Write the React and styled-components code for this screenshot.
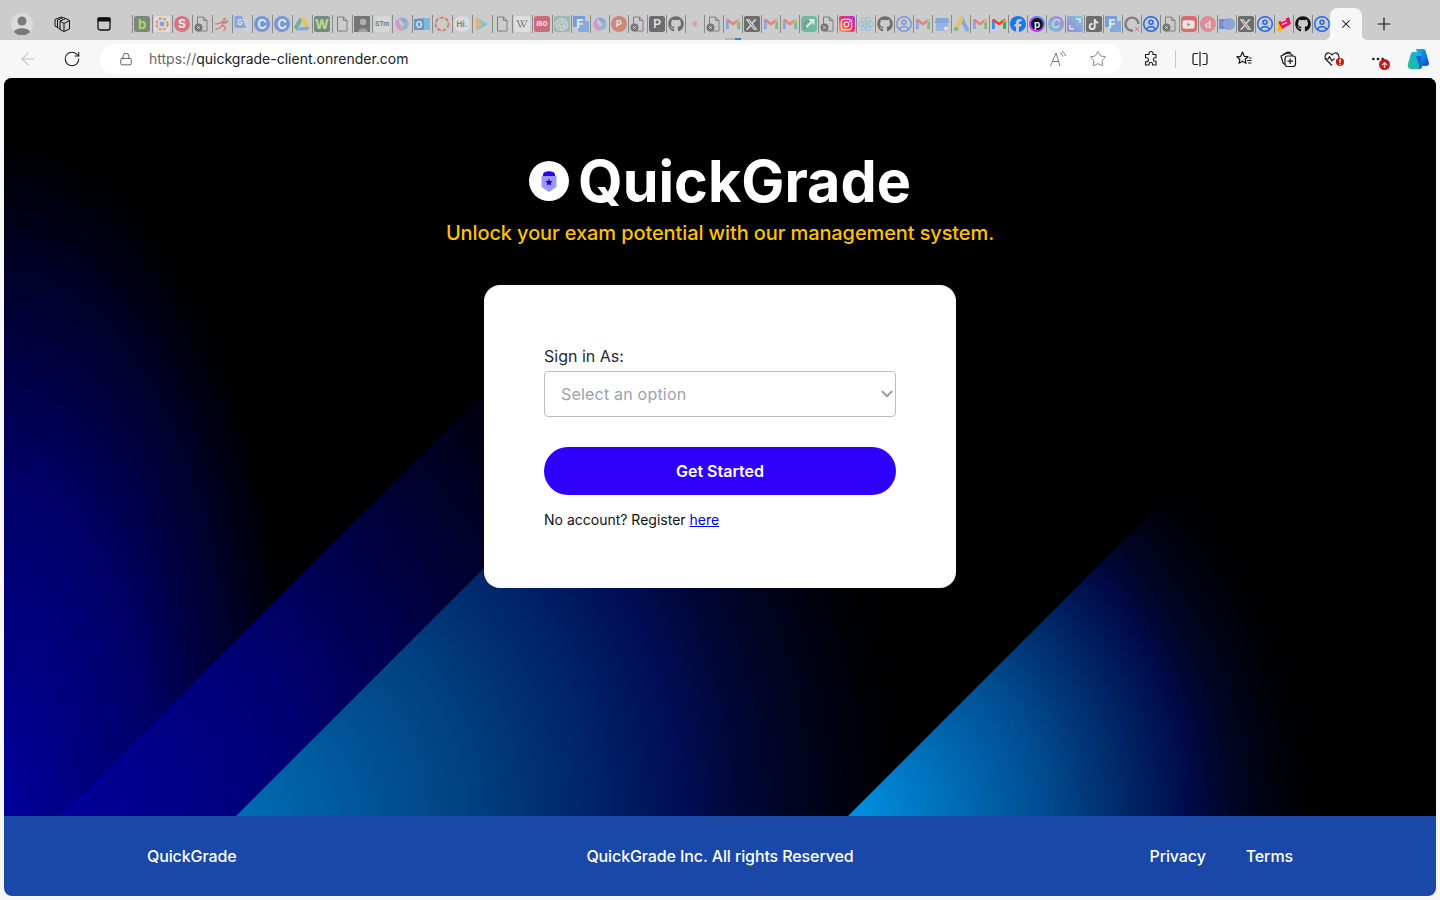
import React from "react";
import styled, { createGlobalStyle } from "styled-components";
import { ArrowLeft, RotateCw, Lock, Star, X, Plus, ChevronDown, Ellipsis } from "lucide-react";
import {
  FaGithub,
  FaXTwitter,
  FaTiktok,
  FaFacebook,
  FaWikipediaW,
  FaInstagram,
  FaReact,
  FaYoutube,
  FaRegCircleUser,
} from "react-icons/fa6";
import { SiOpenai } from "react-icons/si";

const GlobalStyle = createGlobalStyle`
  html, body {
    margin: 0;
    height: 100%;
    background: #f7f7f7;
    overflow: hidden;
  }
  * {
    box-sizing: border-box;
  }
`;

const Frame = styled.div`
  display: flex;
  flex-direction: column;
  height: 100vh;
  font-family: Inter, sans-serif;
`;

const TabStrip = styled.div`
  display: flex;
  align-items: center;
  height: 40px;
  flex: none;
  padding-top: 8px;
  background: #cccccc;
`;

const Avatar = styled.div`
  width: 22px;
  height: 22px;
  margin: 0 8px 0 11px;
  flex: none;
`;

const StripButton = styled.div`
  display: flex;
  justify-content: center;
  align-items: center;
  flex: none;
  width: ${(p) => p.$width || 42}px;
  color: #111;
`;

const PinnedTabs = styled.div`
  display: flex;
  margin-left: 6.7px;
  flex: none;
`;

const PinnedSlot = styled.div`
  position: relative;
  display: flex;
  justify-content: center;
  align-items: center;
  width: ${(p) => p.$pitch}px;
  height: 18px;
  flex: none;
  border-left: 1px solid #8a8a8a;
`;

const Loading = styled.div`
  position: absolute;
  top: 23px;
  left: 1px;
  width: 16px;
  height: 2px;
  background: linear-gradient(90deg, #b5b5b5 62%, #3b7de8 62%);
`;

const Fav = styled.div`
  display: flex;
  width: 16px;
  height: 16px;
  opacity: ${(p) => (p.$bright ? 1 : 0.5)};
`;

const ActiveTab = styled.div`
  position: relative;
  display: flex;
  justify-content: center;
  align-items: center;
  align-self: flex-end;
  width: 32px;
  height: 32px;
  margin-left: -0.7px;
  flex: none;
  background: #f7f7f7;
  border-radius: 8px 8px 0 0;
  color: #111;

  &::before,
  &::after {
    content: "";
    position: absolute;
    bottom: 0;
    width: 6px;
    height: 6px;
  }
  &::before {
    left: -6px;
    background: radial-gradient(circle at 0 0, #cccccc 6px, #f7f7f7 6.5px);
  }
  &::after {
    right: -6px;
    background: radial-gradient(circle at 100% 0, #cccccc 6px, #f7f7f7 6.5px);
  }
`;

const NewTab = styled.div`
  display: flex;
  justify-content: center;
  width: 44px;
  flex: none;
  color: #111;
`;

const Toolbar = styled.div`
  display: flex;
  align-items: center;
  height: 38px;
  flex: none;
  padding: 0 4px 0 6px;
  background: #f7f7f7;
  color: #1a1a1a;
`;

const NavButton = styled.div`
  position: relative;
  display: flex;
  justify-content: center;
  align-items: center;
  width: ${(p) => p.$width || 44}px;
  margin-left: ${(p) => p.$left || 0}px;
  flex: none;
  color: ${(p) => p.$color || "#1a1a1a"};
`;

const AddressBar = styled.div`
  display: flex;
  align-items: center;
  flex: 1;
  height: 30px;
  margin-left: 6px;
  padding: 0 15px 0 19px;
  border-radius: 15px;
  background: #ffffff;
  font-size: 14px;
  color: #222;
`;

const Scheme = styled.span`
  color: #666;
`;

const Url = styled.div`
  flex: 1;
  margin-left: 16px;
  padding-bottom: 2px;
`;

const BarIcons = styled.div`
  display: flex;
  align-items: center;
  gap: 22px;
  color: #777;
`;

const ToolDivider = styled.div`
  width: 1px;
  height: 18px;
  margin: 0 2px 0 4px;
  flex: none;
  background: #c8c8c8;
`;

const Badge = styled.span`
  position: absolute;
  top: ${(p) => p.$top}px;
  right: ${(p) => p.$right}px;
  display: flex;
  justify-content: center;
  align-items: center;
  width: ${(p) => p.$size}px;
  height: ${(p) => p.$size}px;
  border-radius: 50%;
  background: #c4161c;
  color: #fff;
  font-size: 8px;
  font-weight: 700;
  line-height: 1;
`;

const Page = styled.div`
  display: flex;
  flex-direction: column;
  flex: 1;
  margin: 0 4px 4px;
  border-radius: 8px;
  overflow: hidden;
`;

const Main = styled.main`
  position: relative;
  display: flex;
  flex-direction: column;
  align-items: center;
  flex: 1;
  padding-top: 74px;
  background: #000;
`;

const Backdrop = styled.svg`
  position: absolute;
  inset: 0;
  width: 100%;
  height: 100%;
`;

const Brand = styled.div`
  position: relative;
  display: flex;
  align-items: center;
  gap: 9px;
`;

const Title = styled.h1`
  margin: 0;
  font-size: 57.5px;
  line-height: 58px;
  font-weight: 700;
  color: #fff;
`;

const Tagline = styled.p`
  position: relative;
  margin: 9px 0 0;
  font-size: 20px;
  line-height: 28px;
  font-weight: 500;
  letter-spacing: -0.11px;
  color: #ffc107;
`;

const Card = styled.form`
  position: relative;
  display: flex;
  flex-direction: column;
  width: 472px;
  height: 303px;
  margin-top: 38px;
  padding: 59px 60px 0;
  border-radius: 16px;
  background: #fff;
`;

const Label = styled.label`
  font-size: 16px;
  line-height: 24px;
  color: #1f2937;
`;

const SelectWrap = styled.div`
  position: relative;
  margin-top: 3px;
`;

const Select = styled.select`
  display: block;
  width: 100%;
  height: 46px;
  padding: 0 16px;
  appearance: none;
  background: #fff;
  border: 1px solid #bcbcc0;
  border-radius: 4px;
  font-family: Inter, sans-serif;
  font-size: 16px;
  letter-spacing: 0.2px;
  color: #9ca3af;
`;

const SelectArrow = styled(ChevronDown)`
  position: absolute;
  top: 14px;
  right: 0;
  color: #9aa1b0;
`;

const SubmitButton = styled.button`
  height: 48px;
  margin-top: 30px;
  border: 0;
  border-radius: 24px;
  background: #3000ff;
  font-family: Inter, sans-serif;
  font-size: 16px;
  font-weight: 600;
  color: #fff;
`;

const RegisterNote = styled.p`
  margin: 15px 0 0;
  font-size: 14px;
  line-height: 20px;
  color: #111;
`;

const RegisterLink = styled.a`
  color: #0000ee;
  text-decoration: underline;
`;

const Footer = styled.footer`
  display: grid;
  grid-template-columns: 1fr auto 1fr;
  align-items: center;
  height: 80px;
  flex: none;
  padding: 0 143px;
  background: #1a48a8;
  font-size: 16px;
  font-weight: 500;
  letter-spacing: -0.11px;
  color: #fff;
`;

const FooterLinks = styled.div`
  display: flex;
  justify-content: flex-end;
  gap: 40px;
`;

const Tile = styled.div`
  display: flex;
  justify-content: center;
  align-items: center;
  width: 16px;
  height: 16px;
  border-radius: ${(p) => p.$radius || "2px"};
  background: ${(p) => p.$bg};
  color: ${(p) => p.$color};
`;

function DocIcon({ broken }) {
  return (
    <svg viewBox="0 0 16 16" width="16" height="16" fill="none">
      <path d="M3.5 1h6l3.500 3.500V15h-9.500z" stroke="#333" strokeWidth="1" />
      <path d="M9.500 1v3.500H13" stroke="#333" strokeWidth="1" />
      {broken && <circle cx="4.500" cy="11.500" r="4" fill="#222" />}
      {broken && <path d="M3.200 10.200l2.600 2.600M5.800 10.200l-2.600 2.600" stroke="#fff" strokeWidth="0.9" />}
    </svg>
  );
}

function GmailIcon() {
  return (
    <svg viewBox="0 0 16 16" width="16" height="16" fill="none">
      <path d="M1 13V4.500l2.800 1V13z" fill="#4285f4" />
      <path d="M12.200 13V5.500l2.800-1V13z" fill="#34a853" />
      <path d="M1 4.500c0-1.400 1.600-2 2.600-1.200L8 6.600l4.400-3.300c1-.8 2.600-.2 2.600 1.200l-2.800 2L8 9.600 3.800 6.500z" fill="#ea4335" />
      <path d="M12.200 3.900l2.800-.4v1.600l-2.800 2z" fill="#fbbc04" />
    </svg>
  );
}

function SwirlIcon() {
  return (
    <svg viewBox="0 0 16 16" width="16" height="16" fill="none">
      <path d="M8 1.500a6.500 6.500 0 0 1 6 4L10 8 8 5 5 3z" fill="#5b7be8" />
      <path d="M14 5.500a6.500 6.500 0 0 1-4 9L8 11l2-3z" fill="#4fb0c8" />
      <path d="M10 14.500a6.500 6.500 0 0 1-8.500-6.500L5 6l3 5z" fill="#d66bc0" />
      <path d="M1.500 8A6.500 6.500 0 0 1 8 1.500L5 3v3z" fill="#9a6be0" />
    </svg>
  );
}

function Letter({ bg, fg = "#fff", round, size = 11, weight = 700, text, family = "Inter, sans-serif" }) {
  return (
    <svg viewBox="0 0 16 16" width="16" height="16">
      {round ? <circle cx="8" cy="8" r="8" fill={bg} /> : <rect width="16" height="16" rx="2.500" fill={bg} />}
      <text x="8" y="8" dy="0.36em" textAnchor="middle" fontFamily={family} fontSize={size} fontWeight={weight} fill={fg}>
        {text}
      </text>
    </svg>
  );
}

// every pinned tab's favicon, left to right
const renderers = {
  b: () => <Letter bg="#2b4a2b" fg="#8fe000" text="b" size={13} />,
  dots: () => (
    <svg viewBox="0 0 16 16" width="16" height="16">
      <rect width="16" height="16" rx="2" fill="#eee" />
      <circle cx="8" cy="8" r="5.500" fill="none" stroke="#e8703a" strokeWidth="2.400" strokeDasharray="3 1.400" />
      <circle cx="8" cy="8" r="2.400" fill="#3a78d8" />
    </svg>
  ),
  s: () => <Letter bg="#e01f3d" text="S" round size={12} />,
  docx: () => <DocIcon broken />,
  doc: () => <DocIcon />,
  runner: () => (
    <svg viewBox="0 0 16 16" width="16" height="16" fill="none" stroke="#e0282e" strokeWidth="1.300">
      <circle cx="10.500" cy="3" r="1.300" fill="#e0282e" stroke="none" />
      <path d="M1 8c3 0 6-1 8.500-3l-1 4 3 3-2 3M8.500 9L5 12.500 1.500 13M10 6l4.500-1M7 6.500l6 .5" />
    </svg>
  ),
  translate: () => (
    <svg viewBox="0 0 16 16" width="16" height="16">
      <path d="M7 4h7.500a1 1 0 0 1 1 1v9.500a1 1 0 0 1-1 1H9z" fill="#c9d4ee" />
      <path d="M1.500 0h6.300L12 12H1.500a1 1 0 0 1-1-1V1a1 1 0 0 1 1-1z" fill="#4285f4" />
      <text x="5.800" y="8.800" textAnchor="middle" fontFamily="Inter, sans-serif" fontSize="7" fontWeight="700" fill="#fff">
        G
      </text>
    </svg>
  ),
  c: () => <Letter bg="#1a66e8" text="C" round size={13} />,
  drive: () => (
    <svg viewBox="0 0 16 16" width="16" height="16">
      <path d="M5.500 1.500h5L16 11h-5z" fill="#fbbc04" />
      <path d="M5.500 1.500L0 11l2.500 3.500L8 5z" fill="#0f9d58" />
      <path d="M2.500 14.500h11L16 11H5.300z" fill="#4285f4" />
    </svg>
  ),
  w: () => <Letter bg="#1c4a3a" fg="#a8e05a" text="W" size={13} weight={800} />,
  photo: () => (
    <svg viewBox="0 0 16 16" width="16" height="16">
      <rect width="16" height="16" fill="#222" />
      <circle cx="9" cy="6" r="3.200" fill="#999" />
      <path d="M4 16c1-5 9-5 10 0z" fill="#777" />
    </svg>
  ),
  stm: () => <Letter bg="#e2e2e2" fg="#222" text="STm" size={6.500} />,
  swirl: () => <SwirlIcon />,
  outlook: () => (
    <svg viewBox="0 0 16 16" width="16" height="16">
      <rect x="4" y="2" width="12" height="12" fill="#28a8ea" />
      <rect y="3" width="10" height="11" rx="1" fill="#0f5fb5" />
      <text x="5" y="11.500" textAnchor="middle" fontFamily="Inter, sans-serif" fontSize="8.500" fontWeight="700" fill="#fff">
        O
      </text>
    </svg>
  ),
  dashed: () => (
    <svg viewBox="0 0 16 16" width="16" height="16">
      <circle cx="8" cy="8" r="6.500" fill="none" stroke="#e03020" strokeWidth="2" strokeDasharray="4 1.500" />
    </svg>
  ),
  hi: () => <Letter bg="#ececec" fg="#333" text="Hi." round size={8} />,
  play: () => (
    <svg viewBox="0 0 16 16" width="16" height="16">
      <path d="M2 1l6.500 7L2 15z" fill="#f0a030" />
      <path d="M2 1l12 7-5.500 0z" fill="#40c8a8" />
      <path d="M2 15l12-7-5.500 0z" fill="#30b0d8" />
    </svg>
  ),
  wiki: () => (
    <Tile $bg="#f2f2f2" $color="#222">
      <FaWikipediaW size={12} />
    </Tile>
  ),
  iso: () => <Letter bg="#c8102e" text="ISO" size={6.500} weight={800} />,
  gpt: () => (
    <Tile $bg="#74aa9c" $color="#eee">
      <SiOpenai size={13} />
    </Tile>
  ),
  f: () => (
    <svg viewBox="0 0 16 16" width="16" height="16">
      <rect x="0" y="0" width="12" height="11" fill="#1a73e8" />
      <rect x="5" y="5" width="11" height="11" fill="#3d8de8" />
      <text x="6.800" y="12" textAnchor="middle" fontFamily="Inter, sans-serif" fontSize="12" fontWeight="800" fill="#fff">
        F
      </text>
    </svg>
  ),
  ppt: () => <Letter bg="#d24726" text="P" round size={9} />,
  p: () => <Letter bg="#111" text="P" size={12} weight={600} />,
  github: () => <FaGithub size={16} color="#111" />,
  eye: () => (
    <svg viewBox="0 0 16 16" width="16" height="16" fill="none">
      <path d="M1 8c3-4 11-4 14 0-3 4-11 4-14 0z" stroke="#b9c4e8" strokeWidth="1.200" />
      <circle cx="8" cy="8" r="2.400" fill="#ee7070" />
    </svg>
  ),
  gmail: () => <GmailIcon />,
  x: () => (
    <Tile $bg="#111" $color="#fff">
      <FaXTwitter size={13} />
    </Tile>
  ),
  arrow: () => (
    <svg viewBox="0 0 16 16" width="16" height="16" fill="none">
      <rect width="16" height="16" rx="4" fill="#10b070" />
      <path d="M4 12.500c-2-3 0-8 5-8" stroke="#5a1e9a" strokeWidth="2.200" strokeDasharray="1.500 .8" />
      <path d="M5.500 11L12 4.500M8 4h4.500v4.500" stroke="#fff" strokeWidth="1.800" />
    </svg>
  ),
  insta: () => (
    <Tile $bg="linear-gradient(45deg, #fbad50, #e1306c 55%, #a838e8)" $color="#fff">
      <FaInstagram size={13} />
    </Tile>
  ),
  react: () => <FaReact size={16} color="#3fb4d8" />,
  person: () => <FaRegCircleUser size={16} color="#2266ee" />,
  store: () => (
    <svg viewBox="0 0 16 16" width="16" height="16">
      <path d="M2 2h12l1.500 5H.5z" fill="#4285f4" />
      <rect x="2" y="7" width="12" height="8" fill="#6a9cf0" />
      <circle cx="12" cy="12.500" r="2" fill="#fff" />
    </svg>
  ),
  ads: () => (
    <svg viewBox="0 0 16 16" width="16" height="16" fill="none" strokeLinecap="round">
      <path d="M8.500 2.500l5.500 11" stroke="#4285f4" strokeWidth="4" />
      <path d="M8.500 2.500l-5 10" stroke="#fbbc04" strokeWidth="4" />
      <circle cx="3" cy="13" r="2.200" fill="#34a853" />
    </svg>
  ),
  fb: () => <FaFacebook size={16} color="#1877f2" />,
  picsart: () => (
    <svg viewBox="0 0 16 16" width="16" height="16">
      <defs>
        <linearGradient id="pa" x1="0" y1="1" x2="1" y2="0">
          <stop offset="0" stopColor="#f0f" />
          <stop offset="1" stopColor="#30a0ff" />
        </linearGradient>
      </defs>
      <circle cx="8" cy="8" r="8" fill="url(#pa)" />
      <circle cx="8" cy="8" r="6" fill="#111" />
      <text x="8" y="11.500" textAnchor="middle" fontFamily="Inter, sans-serif" fontSize="10" fontWeight="600" fill="#fff">
        p
      </text>
    </svg>
  ),
  canva: () => (
    <svg viewBox="0 0 16 16" width="16" height="16">
      <defs>
        <linearGradient id="cv" x1="0" y1="1" x2="1" y2="0">
          <stop offset="0" stopColor="#20c4d8" />
          <stop offset="1" stopColor="#7d3ce8" />
        </linearGradient>
      </defs>
      <circle cx="8" cy="8" r="8" fill="url(#cv)" />
      <text x="8" y="12" textAnchor="middle" fontFamily="Inter, sans-serif" fontSize="12" fontStyle="italic" fill="#fff">
        C
      </text>
    </svg>
  ),
  gradient: () => (
    <svg viewBox="0 0 16 16" width="16" height="16" fill="none">
      <defs>
        <linearGradient id="gs" x1="0" y1="1" x2="1" y2="0">
          <stop offset="0" stopColor="#6a3de8" />
          <stop offset="1" stopColor="#35c8e8" />
        </linearGradient>
      </defs>
      <rect width="16" height="16" rx="2" fill="url(#gs)" />
      <path d="M3 9v4h4M13 7V3H9" stroke="#fff" strokeWidth="1.400" />
    </svg>
  ),
  tiktok: () => (
    <Tile $bg="#111" $color="#fff">
      <FaTiktok size={11} />
    </Tile>
  ),
  arcx: () => (
    <svg viewBox="0 0 16 16" width="16" height="16" fill="none">
      <path d="M9 14.500A6.500 6.500 0 1 1 14.500 8" stroke="#333" strokeWidth="2.400" />
      <path d="M11 11l4 4M15 11l-4 4" stroke="#d03030" strokeWidth="1" />
    </svg>
  ),
  yt: () => (
    <Tile $bg="#e01010" $color="#fff" $radius="4px">
      <FaYoutube size={13} />
    </Tile>
  ),
  d: () => <Letter bg="#ec5060" text="d" round size={11} family="Liberation Serif, serif" />,
  pill: () => (
    <svg viewBox="0 0 16 16" width="16" height="16">
      <path d="M0 3h8v10H0z" fill="#1a56d8" />
      <circle cx="10" cy="8" r="6" fill="#4a7ce8" />
    </svg>
  ),
  flag: () => (
    <svg viewBox="0 0 16 16" width="16" height="16">
      <path d="M2 6l11-5 2 7-9 5z" fill="#f0145a" />
      <path d="M5 5.500l5-2M6 8.500l5-2" stroke="#fff" strokeWidth="1.100" />
      <path d="M2 6l4 7-1.500 2.500L2 15z" fill="#f5b800" />
    </svg>
  ),
};

const wideTabs = ["b", "dots", "s", "docx", "runner", "translate", "c", "c", "drive", "w", "doc", "photo", "stm", "swirl", "outlook", "dashed", "hi", "play", "doc", "wiki", "iso"];

const narrowTabs = [
  { kind: "gpt" },
  { kind: "f" },
  { kind: "swirl" },
  { kind: "ppt" },
  { kind: "docx" },
  { kind: "p" },
  { kind: "github" },
  { kind: "eye" },
  { kind: "docx" },
  { kind: "gmail", loading: true },
  { kind: "x" },
  { kind: "gmail" },
  { kind: "gmail" },
  { kind: "arrow" },
  { kind: "docx" },
  { kind: "insta", bright: true },
  { kind: "react" },
  { kind: "github" },
  { kind: "person" },
  { kind: "gmail" },
  { kind: "store" },
  { kind: "ads" },
  { kind: "gmail" },
  { kind: "gmail", bright: true },
  { kind: "fb", bright: true },
  { kind: "picsart", bright: true },
  { kind: "canva" },
  { kind: "gradient" },
  { kind: "tiktok" },
  { kind: "f" },
  { kind: "arcx" },
  { kind: "person", bright: true },
  { kind: "docx" },
  { kind: "yt" },
  { kind: "d" },
  { kind: "pill" },
  { kind: "x" },
  { kind: "person", bright: true },
  { kind: "flag", bright: true },
  { kind: "github", bright: true },
  { kind: "person", bright: true },
];

function Slot({ pitch, kind, bright, loading }) {
  const Icon = renderers[kind];
  return (
    <PinnedSlot $pitch={pitch}>
      <Fav $bright={bright}>
        <Icon />
      </Fav>
      {loading && <Loading />}
    </PinnedSlot>
  );
}

function BrowserChrome() {
  return (
    <>
      <TabStrip>
        <Avatar>
          <svg viewBox="0 0 22 22" width="22" height="22">
            <circle cx="11" cy="11" r="11" fill="#dcdcdc" />
            <circle cx="11" cy="8" r="4.500" fill="#7a7a7a" />
            <path d="M3 19c1.500-5 14.500-5 16 0a11 11 0 0 1-16 0z" fill="#7a7a7a" />
          </svg>
        </Avatar>
        <StripButton>
          <svg viewBox="0 0 18 18" width="18" height="18" fill="none" stroke="#111" strokeWidth="1" strokeLinejoin="round">
            <path d="M7 6l6-2.500 3.500 2v8.500L11 16.500 7 14.500z" />
            <path d="M11 8.500v8M7 6l4 2.500 5.500-3" />
            <path d="M7 14l-2.500-1.500V5l6-2.500 2 1M4.500 12.500l-2.500-1.500V4.500L8 2l2 .8" />
          </svg>
        </StripButton>
        <StripButton>
          <svg viewBox="0 0 14 14" width="14" height="14" fill="none" stroke="#111">
            <rect x="1" y="1" width="12" height="12" rx="2" strokeWidth="1.300" />
            <rect x="1" y="1" width="12" height="3" fill="#111" strokeWidth="1" />
          </svg>
        </StripButton>
        <PinnedTabs>
          {wideTabs.map((kind, i) => (
            <Slot key={i} pitch={20} kind={kind} />
          ))}
          {narrowTabs.map((tab, i) => (
            <Slot key={i} pitch={19} {...tab} />
          ))}
        </PinnedTabs>
        <ActiveTab>
          <X size={14} strokeWidth={1.800} />
        </ActiveTab>
        <NewTab>
          <Plus size={20} strokeWidth={1.400} />
        </NewTab>
      </TabStrip>
      <Toolbar>
        <NavButton $color="#c4c4c4">
          <ArrowLeft size={20} strokeWidth={1.300} />
        </NavButton>
        <NavButton>
          <RotateCw size={18} strokeWidth={1.400} />
        </NavButton>
        <AddressBar>
          <Lock size={14} strokeWidth={1.400} color="#444" />
          <Url>
            <Scheme>https://</Scheme>quickgrade-client.onrender.com
          </Url>
          <BarIcons>
            <svg viewBox="0 0 18 18" width="18" height="18" fill="none" stroke="#777" strokeWidth="1">
              <path d="M1.500 16L7 3l4 13M3.500 11.500h6" />
              <path d="M11 3c1.500.5 2.500 1.800 2.800 3.500M13 1.500c2 .8 3.200 2.500 3.500 4.500" />
            </svg>
            <Star size={18} strokeWidth={1.200} />
          </BarIcons>
        </AddressBar>
        <NavButton $width={40} $left={9}>
          <svg viewBox="0 0 18 18" width="18" height="18" fill="none" stroke="#1a1a1a" strokeWidth="1.100" strokeLinejoin="round">
            <path d="M7 3.500a2 2 0 0 1 4 0v1h3v3.300h-1a1.700 1.700 0 0 0 0 3.400h1V15h-3.500v-1a1.700 1.700 0 0 0-3.400 0v1H3.500v-3.200h1a2 2 0 0 0 0-4h-1V4.500H7z" />
          </svg>
        </NavButton>
        <ToolDivider />
        <NavButton>
          <svg viewBox="0 0 18 18" width="18" height="18" fill="none" stroke="#1a1a1a" strokeWidth="1.200">
            <path d="M7 3.500H3.500a1.500 1.500 0 0 0-1.500 1.500v8a1.500 1.500 0 0 0 1.500 1.500H7M11.500 3.500h3a1.500 1.500 0 0 1 1.500 1.500v8a1.500 1.500 0 0 1-1.500 1.500h-3" />
            <path d="M9 1.500v15" />
          </svg>
        </NavButton>
        <NavButton>
          <svg viewBox="0 0 18 18" width="18" height="18" fill="none" stroke="#1a1a1a" strokeWidth="1.200" strokeLinejoin="round">
            <path d="M7.500 2l1.800 4.300 3.700.4-2.800 2.600.8 4-3.500-2.100L4 13.300l.8-4L2 6.700l3.700-.4z" />
            <path d="M12 10.500h4.500M13 13h3.500M14 8h2.500" />
          </svg>
        </NavButton>
        <NavButton>
          <svg viewBox="0 0 18 18" width="18" height="18" fill="none" stroke="#1a1a1a" strokeWidth="1.200" strokeLinejoin="round">
            <rect x="6" y="6" width="10.500" height="10.500" rx="2.500" />
            <path d="M11.200 8.500v5.500M8.500 11.200h5.500" />
            <path d="M6 14.500l-2-1.500-2-7 6.500-3 4.500 1.500v1.500M4 4.500l5-2.500 3 .5" />
          </svg>
        </NavButton>
        <NavButton>
          <svg viewBox="0 0 18 18" width="18" height="18" fill="none" stroke="#1a1a1a" strokeWidth="1.200" strokeLinejoin="round">
            <path d="M9 15.500L3 9.500C.5 6.500 3 2.500 6 3c1.300.2 2.300 1 3 2 .7-1 1.700-1.800 3-2 3-.5 5.500 3.500 3 6.500l-2 2" />
            <path d="M1.500 9H5l1.500-2.500L9 11l1.500-2H12" />
          </svg>
          <Badge $top={8} $right={10} $size={8}>!</Badge>
        </NavButton>
        <NavButton $left={2}>
          <Ellipsis size={16} strokeWidth={2} />
          <Badge $top={8} $right={10} $size={11}>↑</Badge>
        </NavButton>
        <NavButton $width={36}>
          <svg viewBox="0 0 24 24" width="24" height="24">
            <defs>
              <linearGradient id="cpa" x1="0" y1="0" x2="1" y2="1">
                <stop offset="0" stopColor="#1fb6e0" />
                <stop offset="1" stopColor="#0a4fd0" />
              </linearGradient>
              <linearGradient id="cpb" x1="0" y1="1" x2="1" y2="0">
                <stop offset="0" stopColor="#18c48a" />
                <stop offset="1" stopColor="#1fa8f0" />
              </linearGradient>
            </defs>
            <path d="M10 2h7c2 0 2.500 1 3 3l3 11c.5 2-1 3-3 3h-5z" fill="url(#cpa)" />
            <path d="M7 5h5c2 0 3 1 3.500 3L16 19c.5 2-1 3-3 3H6c-3 0-5-2-4-5l2.500-9C5 6 6 5 7 5z" fill="url(#cpb)" />
            <path d="M10 9h5.500L16 19c0 2-1 3-3 3h-1.500c1.500-.5 2-2 1.500-4z" fill="#1566d8" />
          </svg>
        </NavButton>
      </Toolbar>
    </>
  );
}

function BackgroundArt() {
  return (
    <Backdrop viewBox="4 78 1432 738" preserveAspectRatio="none">
      <defs>
        <radialGradient id="edgeGlow" gradientUnits="userSpaceOnUse" cx="0" cy="0" r="1" gradientTransform="translate(4 816) scale(300 680)">
          <stop offset="0" stopColor="#00009c" />
          <stop offset="0.5" stopColor="#000066" />
          <stop offset="1" stopColor="#000" />
        </radialGradient>
        <radialGradient id="bandGlow" gradientUnits="userSpaceOnUse" cx="60" cy="816" r="640">
          <stop offset="0" stopColor="#00009c" />
          <stop offset="0.4" stopColor="#000070" />
          <stop offset="1" stopColor="#000000" />
        </radialGradient>
        <radialGradient id="tealGlow" gradientUnits="userSpaceOnUse" cx="236" cy="816" r="680">
          <stop offset="0" stopColor="#006eb4" />
          <stop offset="0.35" stopColor="#004080" />
          <stop offset="0.65" stopColor="#000e58" />
          <stop offset="1" stopColor="#000028" stopOpacity="0" />
        </radialGradient>
        <radialGradient id="rightGlow" gradientUnits="userSpaceOnUse" cx="848" cy="816" r="490">
          <stop offset="0" stopColor="#0092e4" />
          <stop offset="0.4" stopColor="#004c90" />
          <stop offset="0.7" stopColor="#000a48" />
          <stop offset="1" stopColor="#000" stopOpacity="0" />
        </radialGradient>
      </defs>
      <rect x="4" y="78" width="1432" height="738" fill="url(#edgeGlow)" />
      <polygon points="60,816 876,0 1500,0 1500,816" fill="url(#bandGlow)" />
      <polygon points="236,816 1052,0 1500,0 1500,816" fill="url(#tealGlow)" />
      <polygon points="848,816 1500,164 1500,816" fill="url(#rightGlow)" />
    </Backdrop>
  );
}

function Logo() {
  return (
    <svg viewBox="0 0 40 40" width="40" height="40">
      <circle cx="20" cy="20" r="20" fill="#fff" />
      <path d="M14 16v-2.500c0-4.500 12-4.500 12 0V16z" fill="#2a00f0" />
      <path d="M12.500 15h15v11L20 31l-7.500-5z" fill="#9b97ff" />
      <path d="M20 17.500l1.100 2.400 2.600.3-1.900 1.800.5 2.600-2.300-1.300-2.300 1.300.5-2.600-1.900-1.800 2.600-.3z" fill="#2a00c8" />
    </svg>
  );
}

function App() {
  return (
    <Frame>
      <GlobalStyle />
      <BrowserChrome />
      <Page>
        <Main>
          <BackgroundArt />
          <Brand>
            <Logo />
            <Title>QuickGrade</Title>
          </Brand>
          <Tagline>Unlock your exam potential with our management system.</Tagline>
          <Card>
            <Label htmlFor="role">Sign in As:</Label>
            <SelectWrap>
              <Select id="role" defaultValue="">
                <option value="" disabled>
                  Select an option
                </option>
                <option value="student">Student</option>
                <option value="lecturer">Lecturer</option>
              </Select>
              <SelectArrow size={18} strokeWidth={3} />
            </SelectWrap>
            <SubmitButton type="button">Get Started</SubmitButton>
            <RegisterNote>
              No account? Register <RegisterLink href="#">here</RegisterLink>
            </RegisterNote>
          </Card>
        </Main>
        <Footer>
          <span>QuickGrade</span>
          <span>QuickGrade Inc. All rights Reserved</span>
          <FooterLinks>
            <span>Privacy</span>
            <span>Terms</span>
          </FooterLinks>
        </Footer>
      </Page>
    </Frame>
  );
}

export default App;
